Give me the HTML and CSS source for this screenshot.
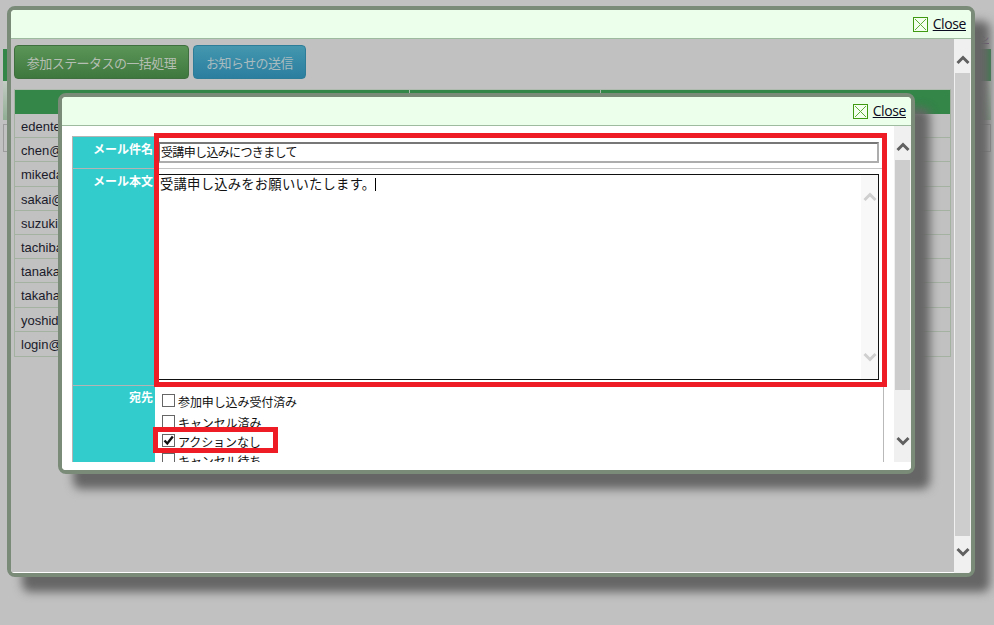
FILE: index.html
```html
<!DOCTYPE html>
<html lang="ja">
<head>
<meta charset="utf-8">
<title>メール送信</title>
<link rel="stylesheet" href="styles.css">
</head>
<body>
<div class="page">
  <div class="page-top"><a class="page-link" href="#">ン</a></div>
  <div class="page-bar"></div>
  <div class="page-fade"></div>
  <div class="page-input"></div>
</div>

<section class="modal modal-outer">
  <header class="modal-head">
    <svg class="x-icon" viewBox="0 0 15 15"><rect x=".5" y=".5" width="14" height="14"/><path d="M2 2 13 13M13 2 2 13"/></svg>
    <a class="close" href="#">Close</a>
  </header>
  <div class="modal-body outer-body">
    <div class="outer-content">
      <div class="btn-row">
        <button class="btn btn-green">参加ステータスの一括処理</button>
        <button class="btn btn-blue">お知らせの送信</button>
      </div>
      <div class="list">
        <div class="list-head"><span></span><span></span><span></span></div>
        <div class="list-row">edentest@example.com</div>
        <div class="list-row">chen@example.com</div>
        <div class="list-row">mikeda@example.com</div>
        <div class="list-row">sakai@example.com</div>
        <div class="list-row">suzuki@example.com</div>
        <div class="list-row">tachibana@example.com</div>
        <div class="list-row">tanaka@example.com</div>
        <div class="list-row">takahashi@example.com</div>
        <div class="list-row">yoshida@example.com</div>
        <div class="list-row">login@example.com</div>
      </div>
    </div>
    <div class="sb sb-outer">
      <div class="sb-btn sb-btn-outer"><svg class="chev" viewBox="0 0 14 10"><path d="M1.500 8 7 2.500 12.500 8"/></svg></div>
      <div class="sb-thumb"></div>
      <div class="sb-btn sb-btn-end"><svg class="chev" viewBox="0 0 14 10"><path d="M1.500 2 7 7.500 12.500 2"/></svg></div>
    </div>
  </div>
</section>

<section class="modal modal-inner">
  <header class="modal-head">
    <svg class="x-icon" viewBox="0 0 15 15"><rect x=".5" y=".5" width="14" height="14"/><path d="M2 2 13 13M13 2 2 13"/></svg>
    <a class="close" href="#">Close</a>
  </header>
  <div class="modal-body inner-body">
    <div class="form-view">
      <div class="form">
        <div class="label label-subject">メール件名</div>
        <div class="field field-subject">
          <div class="text-input">受講申し込みにつきまして</div>
        </div>
        <div class="label label-message">メール本文</div>
        <div class="field field-message">
          <div class="textarea">
            <div class="textarea-text">受講申し込みをお願いいたします。<span class="caret"></span></div>
            <div class="ta-sb">
              <svg class="chev" viewBox="0 0 14 10"><path d="M1.500 8 7 2.500 12.500 8"/></svg>
              <svg class="chev" viewBox="0 0 14 10"><path d="M1.500 2 7 7.500 12.500 2"/></svg>
            </div>
          </div>
        </div>
        <div class="label label-to">宛先</div>
        <div class="field field-to">
          <label class="check"><span class="box"></span>参加申し込み受付済み</label>
          <label class="check"><span class="box"></span>キャンセル済み</label>
          <label class="check"><span class="box"><svg class="tick" viewBox="0 0 13 13"><path d="M2.500 6.500 5.300 9.500 10.800 2.500"/></svg></span>アクションなし</label>
          <label class="check"><span class="box"></span>キャンセル待ち</label>
        </div>
      </div>
    </div>
    <div class="sb sb-inner">
      <div class="sb-btn sb-btn-inner"><svg class="chev" viewBox="0 0 14 10"><path d="M1.500 8 7 2.500 12.500 8"/></svg></div>
      <div class="sb-thumb sb-thumb-inner"></div>
      <div class="sb-rest"><svg class="chev" viewBox="0 0 14 10"><path d="M1.500 2 7 7.500 12.500 2"/></svg></div>
    </div>
  </div>
</section>

<div class="mark mark-main"></div>
<div class="mark mark-check"></div>
</body>
</html>
```
FILE: styles.css
```css
* { box-sizing: border-box; }
html, body { margin: 0; height: 625px; overflow: hidden; }
body {
  background: #c1c1c1;
  font-family: "Noto Sans CJK JP", "Liberation Sans", sans-serif;
  color: #111;
  position: relative;
}

/* page behind the dialogs */
.page { padding: 34px 3px 0; }
.page-top { height: 15px; display: flex; justify-content: flex-end; padding-right: 2px; }
.page-link { font-size: 8px; line-height: 10px; height: 10px; color: #7a4a8a; text-decoration: underline; }
.page-bar { height: 32px; background: #338548; }
.page-fade { height: 39px; background: linear-gradient(#c4cbc4, #8fae93); }
.page-input { margin-top: 4px; height: 28px; border: 1px solid #9c9c9c; }

/* dialog windows */
.modal {
  position: absolute;
  border: 4px solid #7a8b78;
  border-radius: 8px;
  box-shadow: 15px 15px 10px #666;
  display: flex;
  flex-direction: column;
  overflow: hidden;
}
.modal-outer { left: 7px; top: 6px; width: 968px; height: 571px; background: #fff; }
.modal-inner { left: 58px; top: 93px; width: 857px; height: 381px; background: #fff; }

.modal-head {
  height: 29px;
  flex: none;
  background: #ecffea;
  border-bottom: 1px solid #9fbb9f;
  display: flex;
  justify-content: flex-end;
  align-items: center;
  gap: 5px;
  padding: 1px 5px 0 0;
}
.x-icon { width: 15px; height: 15px; flex: none; }
.x-icon rect { fill: #f4fff0; stroke: #3f9a12; }
.x-icon path { stroke: #5fae3a; stroke-width: 1; fill: none; }
.close {
  font: 14px "Open Sans", "Liberation Sans", sans-serif;
  letter-spacing: -.4px;
  color: #0a0a20;
  text-decoration: underline;
  margin-top: -2px;
}

.modal-body { flex: 1; min-height: 0; display: flex; }

/* outer dialog content (dimmed) */
.outer-body { align-items: stretch; }
.outer-content {
  flex: 1;
  min-width: 0;
  background: #c1c1c1;
  padding: 6px 3px 0 3px;
  border-bottom: 1px solid #fff;
}
.btn-row { display: flex; gap: 4px; }
.btn {
  height: 34px;
  padding: 0;
  border-radius: 4px;
  font: 13px "Noto Sans CJK JP", sans-serif;
  letter-spacing: -.55px;
  color: #b5beb2;
}
.btn-green { width: 175px; border: 1px solid #3f6f3e; background: linear-gradient(#5b9557, #3f783e); }
.btn-blue { width: 113px; border: 1px solid #2e7d98; background: linear-gradient(#4497ae, #2b7e9f); color: #a8bbbf; }

.list { margin-top: 10px; border: 1px solid #a4b2a2; border-top: 1px solid #aebbae; }
.list-head {
  height: 24px;
  background: #338548;
  display: grid;
  grid-template-columns: 395px 191px 1fr;
}
.list-head span { border-right: 1px solid #a9b9ab; }
.list-head span:last-child { border-right: 0; }
.list-row {
  height: 24.2px;
  padding: 4px 0 0 6px;
  border-bottom: 1px solid #a4b2a2;
  font: 13px/17px "Liberation Sans", sans-serif;
  color: #1a1a2a;
}
.list-row:last-child { border-bottom: 0; }

/* scrollbars */
.sb { flex: none; width: 17px; display: flex; flex-direction: column; background: #f0f0f0; }
.sb-btn { flex: none; display: flex; align-items: center; justify-content: center; }
.sb-btn-outer { height: 34px; padding-top: 8px; }
.sb-btn-end { height: 37px; padding-bottom: 5px; }
.sb-thumb { flex: 1; margin: 0 1px; background: #cdcdcd; }
.sb-inner { height: 336px; }
.sb-btn-inner { height: 34px; padding-top: 8px; }
.sb-thumb-inner { flex: none; height: 230px; }
.sb-rest { flex: 1; display: flex; align-items: flex-end; justify-content: center; padding-bottom: 16px; }
.chev { width: 14px; height: 10px; flex: none; }
.chev path { fill: none; stroke: #606060; stroke-width: 3; }

/* inner dialog form */
.inner-body { align-items: flex-start; background: #fff; }
.form-view { flex: 1; min-width: 0; height: 336px; overflow: hidden; padding: 10px 10px 0 10px; }
.form {
  display: grid;
  grid-template-columns: 82px 1fr;
  grid-template-rows: 32px 217px 200px;
  width: 812px;
  border-left: 1px solid #b4b4b4;
  border-top: 1px solid #b4b4b4;
  border-right: 1px solid #b9b9b9;
}
.label {
  background: #33cccc;
  color: #fff;
  font-weight: 700;
  font-size: 12px;
  line-height: 14px;
  text-align: right;
  padding: 5px 2px 0 0;
}
.label-subject, .label-message { border-bottom: 1px solid #b4b4b4; }
.label-to { padding-top: 4px; }
.field { min-width: 0; padding: 0 3px; }
.field-subject { padding-top: 5px; border-bottom: 1px solid #c4c4c4; }
.field-message { padding-top: 5px; padding-bottom: 5px; }
.text-input {
  height: 21px;
  width: 721px;
  border: 2px solid;
  border-color: #777 #adadad #adadad #777;
  background: #fff;
  font-size: 12px;
  line-height: 16px;
  letter-spacing: -.65px;
  padding-left: 1px;
  white-space: nowrap;
}
.textarea {
  width: 721px;
  height: 206px;
  border: 1px solid #111;
  display: flex;
  background: #fff;
}
.textarea-text {
  flex: 1;
  font-size: 13.3px;
  line-height: 18px;
  letter-spacing: .25px;
  padding: 0 0 0 1px;
}
.caret { display: inline-block; width: 1px; height: 13px; background: #000; vertical-align: -2px; }
.ta-sb {
  flex: none;
  width: 17px;
  background: #f8f8f8;
  display: flex;
  flex-direction: column;
  justify-content: space-between;
  align-items: center;
  padding: 17px 0;
}
.ta-sb .chev path { stroke: #cfcfcf; }
.field-to { padding: 6px 0 0 7px; display: flex; flex-direction: column; }
.check {
  display: flex;
  flex: none;
  align-items: center;
  height: 19px;
  font-size: 12px;
  line-height: 14px;
  letter-spacing: -.1px;
  white-space: nowrap;
}
.check:first-child { margin-bottom: 2px; }
.box {
  flex: none;
  width: 13px;
  height: 13px;
  margin: 0 3px 2px 0;
  border: 1px solid #666;
  background: #fff;
  position: relative;
}
.tick { position: absolute; left: -1px; top: -1px; width: 13px; height: 13px; }
.tick path { fill: none; stroke: #111; stroke-width: 2.4; }

/* red annotations over the screenshot */
.mark { position: absolute; border: 5px solid #ee1c25; }
.mark-main { left: 154px; top: 133px; width: 733px; height: 254px; }
.mark-check { left: 153px; top: 427px; width: 125px; height: 26px; }
```
